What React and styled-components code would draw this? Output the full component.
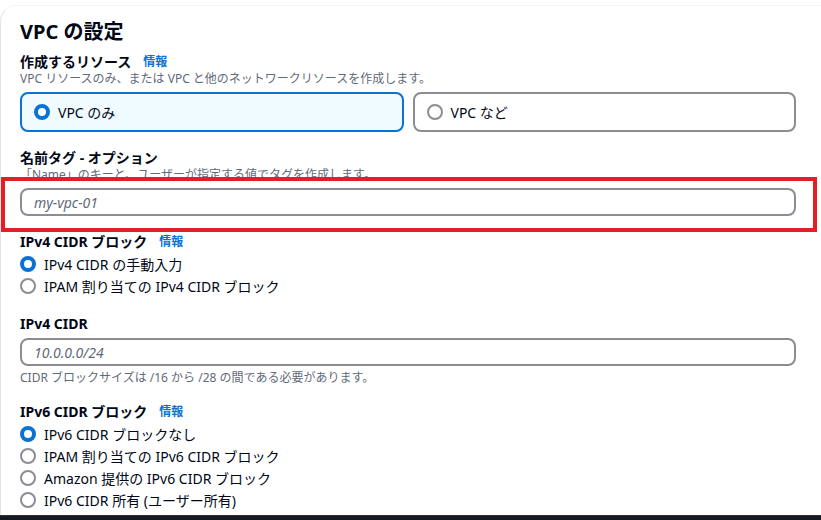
import React from 'react';
import styled, { createGlobalStyle } from 'styled-components';

const GlobalStyle = createGlobalStyle`
  html, body {
    margin: 0;
    padding: 0;
    background: #ffffff;
    overflow: hidden;
  }
  body {
    font-family: "Noto Sans", "Noto Sans CJK JP", sans-serif;
    color: #000716;
  }
`;

const Page = styled.div`
  width: 821px;
  height: 520px;
  display: flex;
  flex-direction: column;
  overflow: hidden;
`;

const Card = styled.div`
  flex: 1;
  margin-top: 5px;
  margin-right: -40px;
  border-left: 1px solid #e3e4e6;
  border-top: 1px solid #f4f4f5;
  border-top-left-radius: 16px;
  padding: 12px 65px 0 19px;
  overflow: hidden;
`;

const Footer = styled.div`
  height: 4px;
  background: #16191f;
  border-top: 1px solid #2a3038;
`;

const Title = styled.h2`
  margin: 0;
  font-size: 20px;
  line-height: 28px;
  font-weight: 700;
  color: #000716;
`;

const Field = styled.div`
  position: relative;
  margin-top: ${(p) => p.$gap}px;
`;

const Label = styled.div`
  display: flex;
  align-items: center;
  gap: 12px;
  font-size: 14px;
  line-height: 18px;
  font-weight: 700;
`;

const InfoLink = styled.span`
  font-size: 12px;
  font-weight: 700;
  color: #0972d3;
`;

const Desc = styled.div`
  font-size: 12px;
  line-height: 16px;
  color: #5f6b7a;
`;

const Tiles = styled.div`
  display: grid;
  grid-template-columns: 1fr 1fr;
  gap: 9px;
  margin-top: 5px;
`;

const Tile = styled.div`
  height: 40px;
  box-sizing: border-box;
  display: flex;
  align-items: center;
  gap: 8px;
  padding: 0 12px;
  border: 2px solid ${(p) => (p.$selected ? '#0972d3' : '#8c8c94')};
  background: ${(p) => (p.$selected ? '#f0fbff' : '#ffffff')};
  border-radius: 8px;
  font-size: 14px;
`;

const Radio = styled.span`
  width: 16px;
  height: 16px;
  box-sizing: border-box;
  border-radius: 50%;
  flex-shrink: 0;
  background: #ffffff;
  border: ${(p) => (p.$checked ? '4.5px solid #0972d3' : '2px solid #8c8c94')};
`;

const RadioList = styled.div`
  margin-top: 2px;
  display: flex;
  flex-direction: column;
`;

const RadioRow = styled.div`
  display: flex;
  align-items: center;
  gap: 8px;
  height: 22px;
  font-size: 14px;
`;

const Input = styled.input`
  display: block;
  width: 100%;
  height: 28px;
  box-sizing: border-box;
  margin-top: 5px;
  border: 2px solid #8c8c94;
  border-radius: 8px;
  padding: 0 12px;
  font-family: "Noto Sans", "Noto Sans CJK JP", sans-serif;
  font-size: 14px;
  background: #ffffff;
  &::placeholder {
    color: #5f6b7a;
    font-style: italic;
  }
`;

const Helper = styled(Desc)`
  margin-top: 4px;
`;

const Highlight = styled.div`
  position: absolute;
  left: -19px;
  right: -21px;
  top: 28px;
  height: 55px;
  box-sizing: border-box;
  border: 4px solid #e31e24;
  pointer-events: none;
`;

const RadioGroup = ({ items, checked }) => (
  <RadioList>
    {items.map((label, i) => (
      <RadioRow key={label}>
        <Radio $checked={i === checked} />
        {label}
      </RadioRow>
    ))}
  </RadioList>
);

export default function App() {
  return (
    <>
      <GlobalStyle />
      <Page>
        <Card>
          <Title>VPC の設定</Title>

          <Field $gap={7}>
            <Label>
              作成するリソース <InfoLink>情報</InfoLink>
            </Label>
            <Desc>VPC リソースのみ、または VPC と他のネットワークリソースを作成します。</Desc>
            <Tiles>
              <Tile $selected>
                <Radio $checked />
                VPC のみ
              </Tile>
              <Tile>
                <Radio />
                VPC など
              </Tile>
            </Tiles>
          </Field>

          <Field $gap={17}>
            <Label>名前タグ - オプション</Label>
            <Desc>「Name」のキーと、ユーザーが指定する値でタグを作成します。</Desc>
            <Input placeholder="my-vpc-01" readOnly />
            <Highlight />
          </Field>

          <Field $gap={17}>
            <Label>
              IPv4 CIDR ブロック <InfoLink>情報</InfoLink>
            </Label>
            <RadioGroup
              checked={0}
              items={['IPv4 CIDR の手動入力', 'IPAM 割り当ての IPv4 CIDR ブロック']}
            />
          </Field>

          <Field $gap={18}>
            <Label>IPv4 CIDR</Label>
            <Input placeholder="10.0.0.0/24" readOnly />
            <Helper>CIDR ブロックサイズは /16 から /28 の間である必要があります。</Helper>
          </Field>

          <Field $gap={17}>
            <Label>
              IPv6 CIDR ブロック <InfoLink>情報</InfoLink>
            </Label>
            <RadioGroup
              checked={0}
              items={[
                'IPv6 CIDR ブロックなし',
                'IPAM 割り当ての IPv6 CIDR ブロック',
                'Amazon 提供の IPv6 CIDR ブロック',
                'IPv6 CIDR 所有 (ユーザー所有)',
              ]}
            />
          </Field>
        </Card>
        <Footer />
      </Page>
    </>
  );
}
